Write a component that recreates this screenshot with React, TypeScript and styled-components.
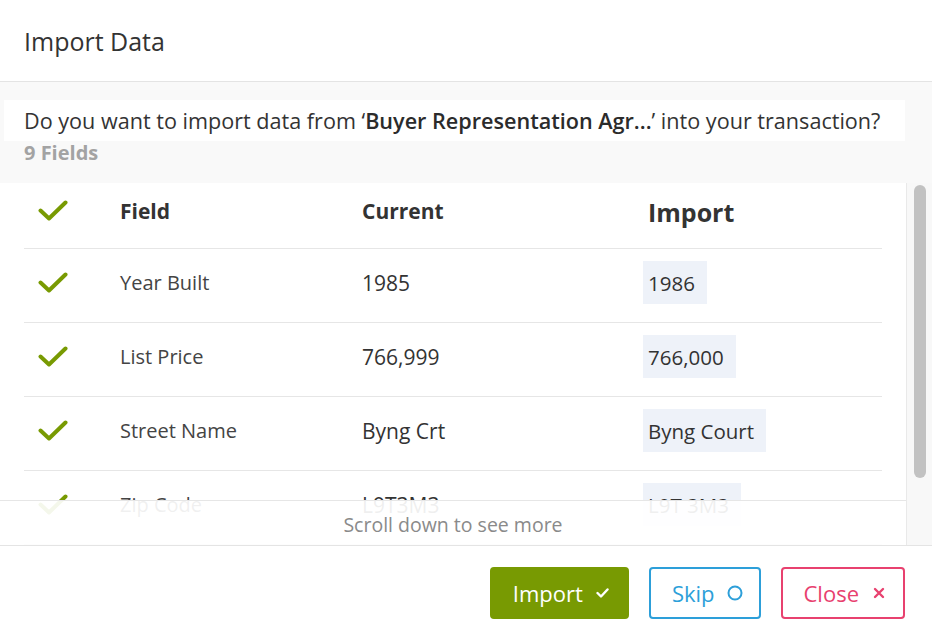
import React from 'react'
import styled, { createGlobalStyle } from 'styled-components'

const GlobalStyle = createGlobalStyle`
  html, body {
    margin: 0;
    padding: 0;
    background: #ffffff;
  }
  body {
    font-family: 'Open Sans', 'Noto Sans', sans-serif;
    color: #333333;
  }
  * {
    box-sizing: border-box;
  }
`

const Modal = styled.div`
  width: 932px;
  height: 639px;
  display: flex;
  flex-direction: column;
  background: #ffffff;
  overflow: hidden;
`

const Header = styled.div`
  height: 82px;
  flex: none;
  display: flex;
  align-items: center;
  padding: 0 24px 0;
  border-bottom: 1px solid #e4e4e4;
`

const Title = styled.h1`
  margin: 0;
  font-size: 25px;
  font-weight: 400;
  color: #333333;
`

const Body = styled.div`
  flex: 1;
  min-height: 0;
  display: flex;
  flex-direction: column;
  background: #f9f9f9;
  padding-top: 18px;
`

const Question = styled.p`
  margin: 0 27px 0 4px;
  height: 41px;
  display: flex;
  align-items: center;
  padding: 0 20px;
  background: #ffffff;
  font-size: 21.6px;
  color: #333333;
  white-space: nowrap;

  strong {
    font-weight: 600;
    color: #2b2b2b;
  }
`

const FieldCount = styled.div`
  padding: 0 24px;
  height: 24px;
  line-height: 24px;
  margin-bottom: 18px;
  font-size: 20px;
  font-weight: 700;
  color: #a3a3a3;
`

const TableArea = styled.div`
  position: relative;
  flex: 1;
  min-height: 0;
  display: flex;
  border-bottom: 1px solid #e4e4e4;
`

const Scroller = styled.div`
  flex: 1;
  min-width: 0;
  overflow: hidden;
  background: #ffffff;
`

const ScrollTrack = styled.div`
  width: 26px;
  flex: none;
  padding: 2px 6px 0 7px;
  background: #f8f8f8;
  border-left: 1px solid #e9e9e9;
`

const ScrollThumb = styled.div`
  height: 293px;
  border-radius: 7px;
  background: #c2c2c2;
`

const Row = styled.div<{ $head?: boolean }>`
  display: grid;
  grid-template-columns: 96px 242px 281px 1fr;
  align-items: center;
  margin: 0 24px;
  height: ${({ $head }) => ($head ? '66px' : '74px')};
  padding-bottom: ${({ $head }) => ($head ? '10px' : '6px')};
  border-bottom: 1px solid #e6e6e6;
`

const CheckCell = styled.div`
  padding-left: 14px;
  display: flex;
  align-items: center;
`

const HeadCell = styled.div<{ $large?: boolean }>`
  font-size: ${({ $large }) => ($large ? '25px' : '21px')};
  font-weight: 700;
  color: #333333;
  padding-left: ${({ $large }) => ($large ? '5px' : '0')};
  padding-top: ${({ $large }) => ($large ? '3px' : '0')};
`

const FieldName = styled.div`
  font-size: 20px;
  color: #444444;
`

const Value = styled.div`
  font-size: 21px;
  color: #333333;
`

const ImportValue = styled.span`
  display: inline-flex;
  align-items: center;
  height: 43px;
  padding: 0 12px 0 5px;
  background: #eef2f9;
  font-size: 20.5px;
  color: #333333;
`

const ScrollHint = styled.div`
  position: absolute;
  left: 0;
  right: 26px;
  bottom: 0;
  height: 45px;
  display: flex;
  align-items: center;
  justify-content: center;
  background: rgba(255, 255, 255, 0.92);
  border-top: 1px solid #e6e6e6;
  font-size: 19.5px;
  color: #8a8a8a;
  padding-top: 2px;
`

const Footer = styled.div`
  height: 93px;
  flex: none;
  display: flex;
  align-items: center;
  justify-content: flex-end;
  gap: 20px;
  padding-right: 27px;
  background: #ffffff;
`

const tones = {
  primary: { bg: '#789a02', border: '#789a02', color: '#ffffff' },
  skip: { bg: '#ffffff', border: '#2d9fd9', color: '#2d9fd9' },
  close: { bg: '#ffffff', border: '#e8416f', color: '#e8416f' },
}

const ActionButton = styled.button<{ $tone: keyof typeof tones }>`
  height: 52px;
  display: inline-flex;
  align-items: center;
  gap: 10px;
  padding: 0 14px 0 21px;
  border-radius: 4px;
  font-family: inherit;
  font-size: 22px;
  background: ${({ $tone }) => tones[$tone].bg};
  border: 2px solid ${({ $tone }) => tones[$tone].border};
  color: ${({ $tone }) => tones[$tone].color};
  cursor: pointer;
`

const ButtonIcon = styled.span`
  width: 20px;
  display: inline-flex;
  align-items: center;
  justify-content: center;
`

const Check = () => (
  <svg width="30" height="22" viewBox="0 0 30 22">
    <path
      d="M2.5 10.5 L11 18.5 L27.5 2.5"
      fill="none"
      stroke="#789a02"
      strokeWidth="4"
      strokeLinecap="round"
      strokeLinejoin="round"
    />
  </svg>
)

const rows = [
  { field: 'Year Built', current: '1985', next: '1986' },
  { field: 'List Price', current: '766,999', next: '766,000' },
  { field: 'Street Name', current: 'Byng Crt', next: 'Byng Court' },
  { field: 'Zip Code', current: 'L9T3M3', next: 'L9T 3M3' },
  { field: 'City', current: 'Milton', next: 'Milton' },
]

export default function App() {
  return (
    <Modal>
      <GlobalStyle />
      <Header>
        <Title>Import Data</Title>
      </Header>
      <Body>
        <Question>
          Do you want to import data from ‘<strong>Buyer Representation Agr...</strong>’ into your
          transaction?
        </Question>
        <FieldCount>9 Fields</FieldCount>
        <TableArea>
          <Scroller>
            <Row $head>
              <CheckCell>
                <Check />
              </CheckCell>
              <HeadCell>Field</HeadCell>
              <HeadCell>Current</HeadCell>
              <HeadCell $large>Import</HeadCell>
            </Row>
            {rows.map((r) => (
              <Row key={r.field}>
                <CheckCell>
                  <Check />
                </CheckCell>
                <FieldName>{r.field}</FieldName>
                <Value>{r.current}</Value>
                <div>
                  <ImportValue>{r.next}</ImportValue>
                </div>
              </Row>
            ))}
          </Scroller>
          <ScrollTrack>
            <ScrollThumb />
          </ScrollTrack>
          <ScrollHint>Scroll down to see more</ScrollHint>
        </TableArea>
      </Body>
      <Footer>
        <ActionButton $tone="primary">
          Import
          <ButtonIcon>
            <svg width="13" height="10" viewBox="0 0 13 10">
              <path d="M1.5 5 L5 8.5 L11.5 1.5" fill="none" stroke="#ffffff" strokeWidth="2.4" strokeLinecap="round" strokeLinejoin="round" />
            </svg>
          </ButtonIcon>
        </ActionButton>
        <ActionButton $tone="skip">
          Skip
          <ButtonIcon>
            <svg width="16" height="16" viewBox="0 0 16 16">
              <circle cx="8" cy="8" r="6.5" fill="none" stroke="#2d9fd9" strokeWidth="2" />
            </svg>
          </ButtonIcon>
        </ActionButton>
        <ActionButton $tone="close">
          Close
          <ButtonIcon>
            <svg width="12" height="12" viewBox="0 0 12 12">
              <path d="M2 2 L10 10 M10 2 L2 10" fill="none" stroke="#e8416f" strokeWidth="2.4" strokeLinecap="round" />
            </svg>
          </ButtonIcon>
        </ActionButton>
      </Footer>
    </Modal>
  )
}
